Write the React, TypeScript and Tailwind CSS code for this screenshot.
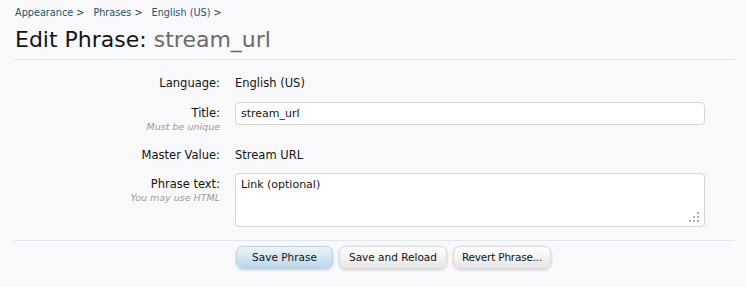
import React from "react";

/* ── Data ─────────────────────────────────────────────── */
const crumbs = ["Appearance", "Phrases", "English (US)"];

const font = "font-['DejaVu_Sans',Verdana,sans-serif]";

/* ── Pieces ───────────────────────────────────────────── */
function Label({ text, hint }: { text: string; hint?: string }) {
  return (
    <div className="w-[205px] shrink-0 text-right">
      <div className="text-[11.5px] leading-[14px] text-[#141414]">{text}</div>
      {hint && (
        <div className="text-[9.5px] leading-[13px] italic text-[#9a9a9a]">
          {hint}
        </div>
      )}
    </div>
  );
}

function Grip() {
  return (
    <svg
      width="10"
      height="10"
      viewBox="0 0 10 10"
      className="absolute right-[6px] bottom-[5px] pointer-events-none"
    >
      <rect x="8" y="0" width="2" height="2" fill="#b0b0b0" />
      <rect x="4" y="4" width="2" height="2" fill="#b0b0b0" />
      <rect x="8" y="4" width="2" height="2" fill="#b0b0b0" />
      <rect x="0" y="8" width="2" height="2" fill="#b0b0b0" />
      <rect x="4" y="8" width="2" height="2" fill="#b0b0b0" />
      <rect x="8" y="8" width="2" height="2" fill="#b0b0b0" />
    </svg>
  );
}

/* ── Page ─────────────────────────────────────────────── */
export default function App() {
  return (
    <div className={`${font} w-[746px] h-[287px] bg-[#f9f9fb] pl-[15px] pr-[11px] overflow-hidden`}>
      {/* Breadcrumb */}
      <div className="pt-[7px] flex text-[9.7px] leading-[12px] text-[#245273]">
        {crumbs.map((c) => (
          <span key={c} className="mr-[9px]">
            {c} <span className="text-[#333]">&gt;</span>
          </span>
        ))}
      </div>

      {/* Title */}
      <h1 className="mt-[8px] text-[22px] leading-[26px] text-[#141414]">
        Edit Phrase: <span className="text-[#6a6a6a]">stream_url</span>
      </h1>
      <div className="mt-[6px] h-px bg-[#dce9f1]" />

      {/* Form */}
      <div className="flex pt-[16px]">
        <Label text="Language:" />
        <div className="ml-[15px] text-[11.5px] leading-[14px] text-[#141414]">
          English (US)
        </div>
      </div>

      <div className="flex mt-[12px]">
        <div className="pt-[4px]">
          <Label text="Title:" hint="Must be unique" />
        </div>
        <input
          defaultValue="stream_url"
          className="ml-[15px] w-[470px] h-[23px] px-[5px] bg-white border border-[#d6d6d6] rounded-[4px] text-[11px] text-[#141414] outline-none"
        />
      </div>

      <div className="flex mt-[15px]">
        <Label text="Master Value:" />
        <div className="ml-[15px] text-[11.5px] leading-[14px] text-[#141414]">
          Stream URL
        </div>
      </div>

      <div className="flex mt-[11px]">
        <div className="pt-[4px]">
          <Label text="Phrase text:" hint="You may use HTML" />
        </div>
        <div className="relative ml-[15px]">
          <textarea
            defaultValue="Link (optional)"
            className="block w-[470px] h-[54px] px-[5px] pt-[4px] bg-white border border-[#d6d6d6] rounded-[4px] text-[11px] leading-[14px] text-[#141414] outline-none resize-none"
          />
          <Grip />
        </div>
      </div>

      <div className="mt-[13px] h-px bg-[#dce9f1]" />

      {/* Buttons */}
      <div className="flex gap-[6px] mt-[5px] pl-[221px] text-[10.5px] text-[#141414]">
        <button className="w-[97px] h-[23px] rounded-[7px] border border-[#bcd3e4] bg-gradient-to-b from-[#edf4fa] to-[#bad6ec] shadow-[0_1px_3px_rgba(0,0,0,0.18)]">
          Save Phrase
        </button>
        <button className="h-[23px] px-[9px] rounded-[7px] border border-[#dadada] bg-gradient-to-b from-[#ffffff] to-[#e6e6e8] shadow-[0_1px_3px_rgba(0,0,0,0.18)]">
          Save and Reload
        </button>
        <button className="h-[23px] px-[8px] rounded-[7px] border border-[#dadada] bg-gradient-to-b from-[#ffffff] to-[#e6e6e8] shadow-[0_1px_3px_rgba(0,0,0,0.18)] tracking-[-0.2px]">
          Revert Phrase...
        </button>
      </div>
    </div>
  );
}
